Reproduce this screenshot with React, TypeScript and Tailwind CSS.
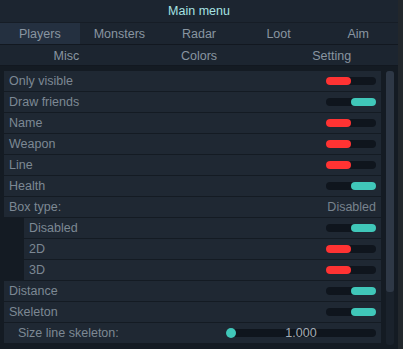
import React from "react";

type Row =
  | { kind: "toggle"; label: string; on: boolean; indent?: boolean }
  | { kind: "text"; label: string; value: string }
  | { kind: "slider"; label: string; value: string };

const rows: Row[] = [
  { kind: "toggle", label: "Only visible", on: false },
  { kind: "toggle", label: "Draw friends", on: true },
  { kind: "toggle", label: "Name", on: false },
  { kind: "toggle", label: "Weapon", on: false },
  { kind: "toggle", label: "Line", on: false },
  { kind: "toggle", label: "Health", on: true },
  { kind: "text", label: "Box type:", value: "Disabled" },
  { kind: "toggle", label: "Disabled", on: true, indent: true },
  { kind: "toggle", label: "2D", on: false, indent: true },
  { kind: "toggle", label: "3D", on: false, indent: true },
  { kind: "toggle", label: "Distance", on: true },
  { kind: "toggle", label: "Skeleton", on: true },
  { kind: "slider", label: "Size line skeleton:", value: "1.000" },
];

function Toggle({ on }: { on: boolean }) {
  return (
    <div className="flex h-[8px] w-[50px] rounded-full bg-[#0f151d]">
      {on ? (
        <>
          <div className="w-[25px]" />
          <div className="h-full w-[25px] rounded-full bg-[#40c7b9]" />
        </>
      ) : (
        <div className="h-full w-[25px] rounded-full bg-[#ff3333]" />
      )}
    </div>
  );
}

export default function App() {
  const tabs1 = ["Players", "Monsters", "Radar", "Loot", "Aim"];
  const tabs2 = ["Misc", "Colors", "Setting"];
  return (
    <div
      className="flex h-[349px] w-[403px] overflow-hidden bg-[#1b2027] text-[12.5px]"
      style={{ fontFamily: '"Liberation Sans", Arial, sans-serif' }}
    >
      <div className="flex w-[398px] flex-col bg-[#141b23]">
        <div className="flex h-[23px] items-center justify-center border-b border-[#161d26] bg-[#1c2530] text-[12.5px] text-[#a6e3e3]">
          Main menu
        </div>
        <div className="grid h-[22px] grid-cols-5 border-b border-[#121820] bg-[#1c2530]">
          {tabs1.map((t, i) => (
            <div
              key={t}
              className={
                "flex items-center justify-center pt-[2px] text-[#8995a1] " +
                (i === 0 ? "bg-[#243040]" : "")
              }
            >
              {t}
            </div>
          ))}
        </div>
        <div className="grid h-[21px] grid-cols-3 border-b border-[#121820] bg-[#1c2530]">
          {tabs2.map((t) => (
            <div key={t} className="flex items-center justify-center pt-[2px] text-[#8995a1]">
              {t}
            </div>
          ))}
        </div>
        <div className="flex flex-1 pt-[5px]">
          <div className="flex w-[382px] flex-col pl-[4px] pr-[1px]">
            {rows.map((r, i) => {
              const indent = r.kind === "toggle" && r.indent;
              return (
                <div
                  key={i}
                  className={
                    "mb-[1px] flex h-[20px] shrink-0 items-center bg-[#1f2833] pr-[5px] text-[#7d8894] " +
                    (indent ? "ml-[20px] pl-[5px]" : r.kind === "slider" ? "pl-[14px]" : "pl-[5px]")
                  }
                >
                  <span className="flex-1 pt-[1px]">{r.label}</span>
                  {r.kind === "toggle" && <Toggle on={r.on} />}
                  {r.kind === "text" && <span className="pt-[1px] text-[#78838e]">{r.value}</span>}
                  {r.kind === "slider" && (
                    <div className="relative flex h-[8px] w-[150px] items-center rounded-full bg-[#0f151d]">
                      <div className="absolute left-0 top-[-1px] h-[10px] w-[10px] rounded-full bg-[#40c7b9]" />
                      <span className="absolute inset-0 flex items-center justify-center text-[#a3abb3] leading-none">
                        {r.value}
                      </span>
                    </div>
                  )}
                </div>
              );
            })}
          </div>
          <div className="flex w-[16px] justify-center pb-[4px]">
            <div className="flex w-[8px] flex-col rounded-[3px] bg-[#1a222c]">
              <div className="h-[221px] rounded-[3px] bg-[#2e3846]" />
            </div>
          </div>
        </div>
      </div>
      <div className="flex-1 bg-[#22272c]" />
    </div>
  );
}
